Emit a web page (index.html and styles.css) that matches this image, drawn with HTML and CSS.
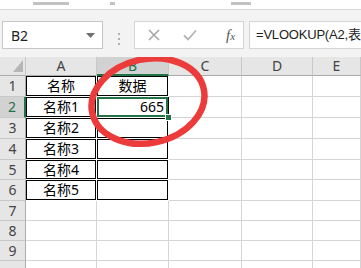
FILE: index.html
```html
<!DOCTYPE html>
<html lang="zh-CN">
<head>
    <meta charset="UTF-8">
    <title>VLOOKUP</title>
    <link rel="stylesheet" href="styles.css">
</head>
<body>
    <div class="ribbon-tail">
        <span class="cut cut-1"></span>
        <span class="cut cut-2"></span>
        <span class="cut cut-3"></span>
    </div>

    <div class="formula-bar">
        <div class="name-box">
            <span>B2</span>
            <svg class="arrow" width="9" height="5" viewBox="0 0 9 5"><path d="M0 0h9L4.5 5z" fill="#6f6f6f"/></svg>
        </div>
        <div class="grip">
            <i></i><i></i><i></i>
        </div>
        <div class="fx-buttons">
            <svg width="12" height="12" viewBox="0 0 12 12"><path d="M1 1l10 10M11 1L1 11" stroke="#a6a6a6" stroke-width="1.6"/></svg>
            <svg width="14" height="12" viewBox="0 0 14 12"><path d="M1 6.5l4 4L13 1.5" stroke="#b4b4b4" stroke-width="1.8" fill="none"/></svg>
            <span class="fx">f<small>x</small></span>
        </div>
        <div class="formula-input">=VLOOKUP(A2,表</div>
    </div>

    <div class="sheet">
        <div class="corner"><svg width="10" height="12" viewBox="0 0 10 12"><path d="M10 0v12H0z" fill="#b5b5b5"/></svg></div>
        <div class="col-head">A</div>
        <div class="col-head active">B</div>
        <div class="col-head">C</div>
        <div class="col-head">D</div>
        <div class="col-head">E</div>

        <div class="row-head">1</div>
        <div class="cell box center">名称</div>
        <div class="cell box center">数据</div>
        <div class="cell"></div><div class="cell"></div><div class="cell"></div>

        <div class="row-head active">2</div>
        <div class="cell box center">名称1</div>
        <div class="cell box right selected">665<span class="handle"></span></div>
        <div class="cell"></div><div class="cell"></div><div class="cell"></div>

        <div class="row-head">3</div>
        <div class="cell box center">名称2</div>
        <div class="cell box"></div>
        <div class="cell"></div><div class="cell"></div><div class="cell"></div>

        <div class="row-head">4</div>
        <div class="cell box center">名称3</div>
        <div class="cell box"></div>
        <div class="cell"></div><div class="cell"></div><div class="cell"></div>

        <div class="row-head">5</div>
        <div class="cell box center">名称4</div>
        <div class="cell box"></div>
        <div class="cell"></div><div class="cell"></div><div class="cell"></div>

        <div class="row-head">6</div>
        <div class="cell box center">名称5</div>
        <div class="cell box"></div>
        <div class="cell"></div><div class="cell"></div><div class="cell"></div>

        <div class="row-head">7</div>
        <div class="cell"></div><div class="cell"></div><div class="cell"></div><div class="cell"></div><div class="cell"></div>
        <div class="row-head">8</div>
        <div class="cell"></div><div class="cell"></div><div class="cell"></div><div class="cell"></div><div class="cell"></div>
        <div class="row-head">9</div>
        <div class="cell"></div><div class="cell"></div><div class="cell"></div><div class="cell"></div><div class="cell"></div>
        <div class="row-head"></div>
        <div class="cell"></div><div class="cell"></div><div class="cell"></div><div class="cell"></div><div class="cell"></div>

        <svg class="mark" width="140" height="110" viewBox="0 0 140 110">
            <ellipse cx="70" cy="55" rx="57" ry="42" transform="rotate(-12 70 55)" fill="none" stroke="#ec3b3b" stroke-width="6.5"/>
        </svg>
    </div>
</body>
</html>
```

FILE: styles.css
```css
body {
    margin: 0;
    width: 361px;
    height: 268px;
    overflow: hidden;
    background-color: #fff;
    font-family: "Noto Sans", "Noto Sans CJK SC", sans-serif;
}
.ribbon-tail {
    height: 9px;
    position: relative;
    background-color: #fff;
    border-bottom: 1px solid #d8d8d8;
}
.cut {
    position: absolute;
    top: 2px;
    height: 3px;
    background-color: #9a9a9a;
    opacity: 0.6;
}
.cut-1 { left: 33px; width: 36px; }
.cut-2 { left: 110px; width: 5px; }
.cut-3 { left: 231px; width: 20px; }
.formula-bar {
    display: flex;
    height: 47px;
    padding: 11px 0 0 2px;
    box-sizing: border-box;
    background-color: #f3f3f3;
}
.name-box {
    width: 101px;
    height: 28px;
    box-sizing: border-box;
    border: 1px solid #c6c6c6;
    background-color: #fff;
    display: flex;
    align-items: center;
    justify-content: space-between;
    padding: 0 7px 0 8px;
    font-size: 14px;
    color: #222;
}
.grip {
    width: 31px;
    display: flex;
    flex-direction: column;
    align-items: center;
    justify-content: center;
    gap: 3px;
}
.grip i {
    width: 2px;
    height: 2px;
    background-color: #b0b0b0;
}
.fx-buttons {
    width: 110px;
    height: 28px;
    box-sizing: border-box;
    border: 1px solid #d4d4d4;
    background-color: #fff;
    display: flex;
    align-items: center;
    gap: 23px;
    padding-left: 13px;
}
.fx {
    font-family: "Liberation Serif", serif;
    font-style: italic;
    font-size: 15px;
    color: #555;
    margin-left: 6px;
}
.fx small {
    font-size: 11px;
}
.formula-input {
    flex: 1;
    min-width: 0;
    height: 28px;
    margin-left: 5px;
    box-sizing: border-box;
    border: 1px solid #d4d4d4;
    border-right: none;
    background-color: #fff;
    padding-left: 6px;
    font-family: "Liberation Sans", "Noto Sans CJK SC", sans-serif;
    font-size: 13px;
    letter-spacing: -0.2px;
    line-height: 26px;
    color: #222;
    white-space: nowrap;
}
.sheet {
    position: relative;
    height: 211px;
    overflow: hidden;
    display: grid;
    grid-template-columns: 26px 71px 72px 73px 71px 48px;
    grid-template-rows: 19px 21px 21px 21px 21px 20px 21px 20px 20px 20px 20px;
    background-color: #f3f3f3;
}
.corner {
    background-color: #e6e6e6;
    border-right: 1px solid #c8c8c8;
    border-bottom: 1px solid #ababab;
    display: flex;
    align-items: flex-end;
    justify-content: flex-end;
    padding: 0 2px 3px 0;
}
.col-head {
    background-color: #e6e6e6;
    border-right: 1px solid #c8c8c8;
    border-bottom: 1px solid #ababab;
    text-align: center;
    font-size: 14px;
    line-height: 18px;
    color: #444;
}
.col-head.active {
    background-color: #d2d2d2;
    border-bottom: 2px solid #217346;
    color: #217346;
}
.row-head {
    background-color: #e6e6e6;
    border-right: 1px solid #ababab;
    border-bottom: 1px solid #c8c8c8;
    text-align: center;
    font-size: 14px;
    line-height: 20px;
    color: #444;
}
.row-head.active {
    background-color: #d2d2d2;
    border-right: 2px solid #217346;
    color: #217346;
}
.cell {
    position: relative;
    background-color: #fff;
    border-right: 1px solid #d4d4d4;
    border-bottom: 1px solid #d4d4d4;
    font-size: 14px;
    line-height: 20px;
    color: #000;
}
.cell.box {
    border-color: #fff;
    box-shadow: inset 0 0 0 1px #000;
}
.center {
    text-align: center;
}
.right {
    text-align: right;
    padding-right: 4px;
}
.cell.selected {
    box-shadow: inset 0 0 0 2px #217346;
    border-right-color: #000;
}
.handle {
    position: absolute;
    right: -4px;
    bottom: -4px;
    width: 5px;
    height: 5px;
    background-color: #217346;
    border: 1px solid #fff;
    z-index: 2;
}
.mark {
    position: absolute;
    left: 78px;
    top: -11px;
    z-index: 3;
}
```
